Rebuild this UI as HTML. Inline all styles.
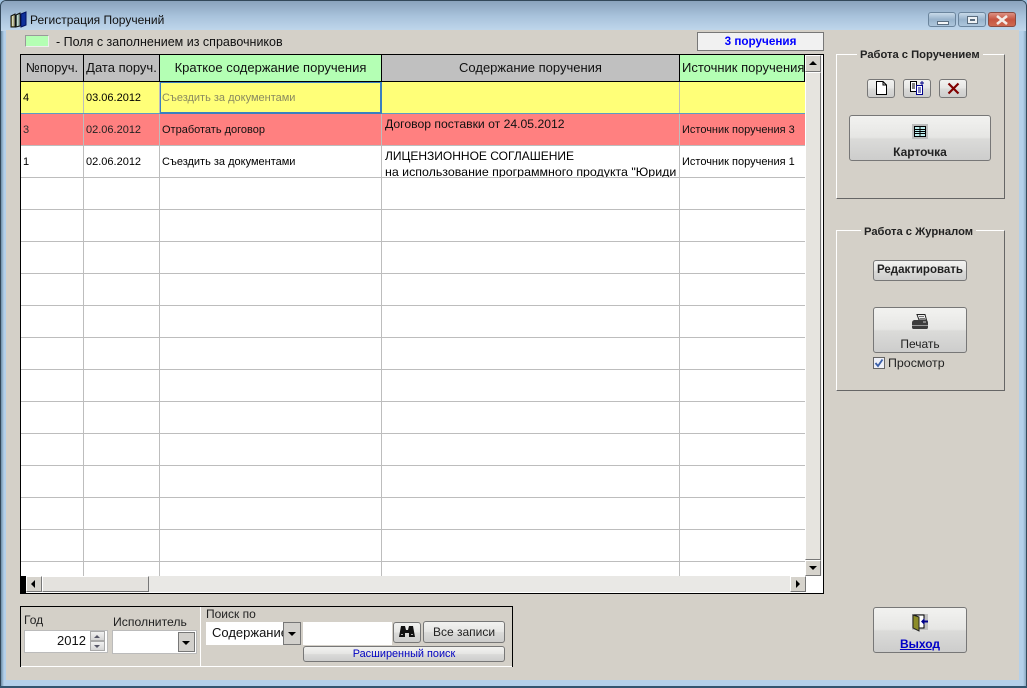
<!DOCTYPE html>
<html><head><meta charset="utf-8"><style>
html,body{margin:0;padding:0;background:#fff}
#w{position:relative;width:1027px;height:688px;overflow:hidden;font-family:"Liberation Sans",sans-serif;font-size:12px;color:#000;background:#9fc2e0}
#w div,#w span.a{position:absolute;box-sizing:border-box;white-space:nowrap}
.t{line-height:14px}
.btn{border:1px solid #777;border-radius:3px;background:linear-gradient(#f2f2f0 0,#e6e6e4 48%,#dbdbd9 52%,#cdcdcc 100%);text-align:center}
.h{height:26px;top:55px;line-height:26px;border-right:1px solid #000;text-align:center;background:#c0c0c0;font-size:13px;color:#111}
.c{font-size:11px;line-height:13px}
.v{top:82px;width:1px;height:494px;background:#bdbdbd}
.l{left:21px;width:784px;height:1px;background:#bdbdbd}
.sb{background:#d6d3cc;border:1px solid;border-color:#fff #777 #777 #fff}
.inp{background:#fff}
</style></head><body><div id="w">
<!-- window frame -->
<div style="left:0;top:0;width:1027px;height:688px;background:linear-gradient(90deg,#6f8fa8 0,#b4d0ea 3px,#b4d0ea 1022px,#6f8fa8 1027px);border:1px solid #33485a;border-radius:6px 6px 0 0"></div>
<div style="left:1px;top:1px;width:1025px;height:30px;background:linear-gradient(#8aa3bd 0,#a8c2db 50%,#c0d7ec 100%);border-radius:5px 5px 0 0"></div>
<div style="left:6px;top:30px;width:1013px;height:650px;background:#d4d0c8"></div>
<div style="left:0;top:686px;width:1027px;height:2px;background:#33556f"></div>
<!-- title -->
<svg style="position:absolute;left:10px;top:11px" width="17" height="17" viewBox="0 0 17 17"><path d="M1 5L5 3V16L1 16Z" fill="#9a9a50" stroke="#111"/><path d="M2.500 5V15M4 4.500V15" stroke="#eee" stroke-width=".7"/><path d="M6 4L10 2V15L6 16Z" fill="#6a9a88" stroke="#111"/><path d="M7.500 4V15M9 3.500V14.500" stroke="#eee" stroke-width=".7"/><path d="M11 3L16 1V14L11 16Z" fill="#10309a" stroke="#001060"/></svg>
<div class="t" style="left:30px;top:13px;font-size:12px;color:#111">Регистрация Поручений</div>
<div style="left:928px;top:12px;width:28px;height:15px;border:1px solid #6b859d;border-radius:3px;background:linear-gradient(#c8dae9,#98b3cc 50%,#adc6dc)"><div style="left:8px;top:8px;width:12px;height:4px;background:#f4f6f8;border:1px solid #5a6d7f"></div></div>
<div style="left:958px;top:12px;width:28px;height:15px;border:1px solid #6b859d;border-radius:3px;background:linear-gradient(#c8dae9,#98b3cc 50%,#adc6dc)"><div style="left:8px;top:3px;width:11px;height:8px;background:#eef2f5;border:1px solid #5a6d7f"><div style="left:2px;top:2px;width:5px;height:2px;background:#5a6d7f"></div></div></div>
<div style="left:988px;top:12px;width:28px;height:15px;border:1px solid #8a4a40;border-radius:3px;background:linear-gradient(#dc9183,#c65440 50%,#cf6a52)"></div>
<svg style="position:absolute;left:995px;top:15px" width="14" height="10" viewBox="0 0 14 10"><path d="M2 1L12 9M12 1L2 9" stroke="#f3ece8" stroke-width="2.600"/></svg>
<!-- legend -->
<div style="left:25px;top:35px;width:24px;height:12px;background:#b4ffb4;border:1px solid;border-color:#999 #eee #eee #999"></div>
<div class="t" style="left:56px;top:35px;font-size:12.500px;color:#111">- Поля с заполнением из справочников</div>
<div style="left:697px;top:32px;width:127px;height:19px;background:#f1f1f1;border:1px solid #777;color:#0000ff;font-weight:bold;font-size:11.700px;text-align:center;line-height:17px">3 поручения</div>
<!-- grid -->
<div style="left:20px;top:54px;width:804px;height:540px;background:#fff;border:1px solid #000"></div>
<div class="h" style="left:21px;width:63px">№поруч.</div>
<div class="h" style="left:84px;width:76px">Дата поруч.</div>
<div class="h" style="left:160px;width:222px;background:#b4ffb4">Краткое содержание поручения</div>
<div class="h" style="left:382px;width:298px">Содержание поручения</div>
<div class="h" style="left:680px;width:125px;background:#b4ffb4;text-align:left;padding-left:2px;overflow:hidden">Источник поручения</div>
<div style="left:21px;top:81px;width:784px;height:1px;background:#000"></div>
<div style="left:21px;top:82px;width:784px;height:32px;background:#ffff78"></div>
<div style="left:21px;top:114px;width:784px;height:32px;background:#ff8080"></div>
<div class="v" style="left:83px"></div><div class="v" style="left:159px"></div><div class="v" style="left:381px"></div><div class="v" style="left:679px"></div>
<div class="l" style="top:145px"></div><div class="l" style="top:177px"></div><div class="l" style="top:209px"></div><div class="l" style="top:241px"></div><div class="l" style="top:273px"></div><div class="l" style="top:305px"></div><div class="l" style="top:337px"></div><div class="l" style="top:369px"></div><div class="l" style="top:401px"></div><div class="l" style="top:433px"></div><div class="l" style="top:465px"></div><div class="l" style="top:497px"></div><div class="l" style="top:529px"></div><div class="l" style="top:561px"></div>
<div style="left:21px;top:113px;width:784px;height:1px;background:#5a9bc4"></div>
<div style="left:160px;top:82px;width:222px;height:32px;border:2px solid #3a7fc0;border-width:1px 2px 2px 1px"></div>
<div class="c" style="left:23px;top:92px">4</div><div class="c" style="left:86px;top:92px">03.06.2012</div><div class="c" style="left:162px;top:92px;color:#8a8a60">Съездить за документами</div>
<div class="c" style="left:23px;top:124px;color:#333">3</div><div class="c" style="left:86px;top:124px;color:#222">02.06.2012</div><div class="c" style="left:162px;top:124px;color:#111">Отработать договор</div>
<div class="t" style="left:385px;top:117px;font-size:12.200px;color:#111">Договор поставки от 24.05.2012</div>
<div class="c" style="left:682px;top:124px;color:#111">Источник поручения 3</div>
<div class="c" style="left:23px;top:156px">1</div><div class="c" style="left:86px;top:156px">02.06.2012</div><div class="c" style="left:162px;top:156px">Съездить за документами</div>
<div style="left:382px;top:146px;width:297px;height:31px;overflow:hidden"><div class="t" style="left:3px;top:3px;font-size:12px">ЛИЦЕНЗИОННОЕ СОГЛАШЕНИЕ</div><div class="t" style="left:3px;top:19px;font-size:12.400px">на использование программного продукта "Юриди</div></div>
<div class="c" style="left:682px;top:156px">Источник поручения 1</div>
<!-- vscroll -->
<div style="left:805px;top:55px;width:17px;height:521px;background:#f1f0ee"></div>
<div class="sb" style="left:805px;top:55px;width:16px;height:17px"></div>
<div style="left:809px;top:61px;width:0;height:0;border:4px solid transparent;border-top:0;border-bottom:4px solid #000"></div>
<div class="sb" style="left:805px;top:72px;width:16px;height:488px;background:#e6e4df"></div>
<div class="sb" style="left:805px;top:560px;width:16px;height:16px"></div>
<div style="left:809px;top:566px;width:0;height:0;border:4px solid transparent;border-bottom:0;border-top:4px solid #000"></div>
<!-- hscroll -->
<div style="left:21px;top:576px;width:5px;height:17px;background:#000"></div>
<div style="left:26px;top:576px;width:780px;height:16px;background:#e9e8e5"></div>
<div class="sb" style="left:26px;top:576px;width:16px;height:16px"></div>
<div style="left:31px;top:580px;width:0;height:0;border:4px solid transparent;border-left:0;border-right:4px solid #000"></div>
<div class="sb" style="left:42px;top:576px;width:107px;height:16px;background:#e4e2de"></div>
<div class="sb" style="left:790px;top:576px;width:16px;height:16px"></div>
<div style="left:796px;top:580px;width:0;height:0;border:4px solid transparent;border-right:0;border-left:4px solid #000"></div>
<!-- group 1 -->
<div style="left:836px;top:54px;width:169px;height:145px;border:1px solid;border-color:#fff #666 #666 #fff"></div>
<div class="t" style="left:857px;top:48px;padding:0 3px;background:#d4d0c8;font-weight:bold;font-size:11.200px;color:#222">Работа с Поручением</div>
<div class="btn" style="left:867px;top:79px;width:28px;height:19px"></div>
<svg style="position:absolute;left:875px;top:81px" width="13" height="14" viewBox="0 0 13 14"><path d="M1.500 .5H8L11.500 4V13.500H1.500Z M8 .5V4H11.500" fill="#fff" stroke="#000"/></svg>
<div class="btn" style="left:903px;top:79px;width:28px;height:19px"></div>
<svg style="position:absolute;left:909px;top:80px" width="17" height="16" viewBox="0 0 17 16"><path d="M1.500 1.500H7.500V11.500H1.500Z" fill="#fff" stroke="#000"/><path d="M3 4H6M3 6H6M3 8H6" stroke="#000"/><path d="M7.500 5.500H13.500V14.500H7.500Z" fill="#fff" stroke="#00008a"/><path d="M9 8H12M9 10H12M9 12H12" stroke="#00008a"/><path d="M13 1V5M11 3H15" stroke="#00008a"/></svg>
<div class="btn" style="left:939px;top:79px;width:28px;height:19px"></div>
<svg style="position:absolute;left:947px;top:82px" width="13" height="13" viewBox="0 0 13 13"><path d="M1.500 1.500L11.500 11.500M11.500 1.500L1.500 11.500" stroke="#800000" stroke-width="2.200"/></svg>
<div class="btn" style="left:849px;top:115px;width:142px;height:46px;font-weight:bold;font-size:12px;padding-top:29px;line-height:14px;color:#222">Карточка</div>
<svg style="position:absolute;left:912px;top:124px" width="16" height="15" viewBox="0 0 16 15"><rect width="16" height="15" fill="#bdbdbd"/><path d="M2.500 2.500H13.500V12.500H2.500Z" fill="#bdeeee" stroke="#000"/><path d="M2 5.500H14M2 7.500H14M2 9.500H14M8 2V13" stroke="#000"/></svg>
<!-- group 2 -->
<div style="left:836px;top:230px;width:169px;height:161px;border:1px solid;border-color:#fff #666 #666 #fff"></div>
<div class="t" style="left:861px;top:225px;padding:0 3px;background:#d4d0c8;font-weight:bold;font-size:11.200px;color:#222">Работа с Журналом</div>
<div class="btn" style="left:873px;top:260px;width:94px;height:21px;font-weight:bold;font-size:11.500px;line-height:19px;color:#222">Редактировать</div>
<div class="btn" style="left:873px;top:307px;width:94px;height:46px;font-size:12px;padding-top:29px;line-height:14px;color:#222">Печать</div>
<svg style="position:absolute;left:911px;top:314px" width="18" height="17" viewBox="0 0 18 17"><path d="M6 .5H14L15.500 6H8Z" fill="#eee" stroke="#222"/><path d="M8 2.500H13M8.500 4.500H14" stroke="#777"/><path d="M1 9C1 7 2 6 4 6H15C16 6 17 7 17 9V13C17 15 16 15 15 15H3C2 15 1 15 1 13Z" fill="#3c3c3c"/><path d="M1 11.500H17" stroke="#999"/><path d="M12 8H15" stroke="#ccc"/></svg>
<div style="left:873px;top:357px;width:12px;height:12px;background:#eef0f8;border:1px solid #666"></div>
<svg style="position:absolute;left:874px;top:358px" width="10" height="10" viewBox="0 0 10 10"><path d="M1.500 5L4 8L8.500 1.500" fill="none" stroke="#3a5fa8" stroke-width="1.800"/></svg>
<div class="t" style="left:888px;top:356px;font-size:12.400px;color:#222">Просмотр</div>
<!-- exit -->
<div class="btn" style="left:873px;top:607px;width:94px;height:46px;font-weight:bold;font-size:12px;padding-top:29px;line-height:14px;color:#0000c8;text-decoration:underline">Выход</div>
<svg style="position:absolute;left:912px;top:614px" width="17" height="18" viewBox="0 0 17 18"><rect width="16" height="16" fill="#c0c0c0"/><path d="M2 1H12V14H2Z" fill="#fff" stroke="#000"/><path d="M1 1L7 3V17L1 14Z" fill="#8c8c28" stroke="#222"/><path d="M16 6.500H12.500V4L9 7.500L12.500 11V8.500H16Z" fill="#00008a"/></svg>
<!-- bottom panel -->
<div style="left:20px;top:606px;width:493px;height:61px;border:1px solid #000;border-bottom:0"></div>
<div style="left:21px;top:666px;width:491px;height:1px;background:#fff"></div>
<div style="left:200px;top:607px;width:1px;height:60px;background:#fff"></div>
<div class="t" style="left:24px;top:613px;font-size:12px;color:#222">Год</div>
<div class="t" style="left:113px;top:615px;font-size:12.200px;color:#222">Исполнитель</div>
<div class="t" style="left:206px;top:607px;font-size:12px;color:#222">Поиск по</div>
<div class="inp" style="left:24px;top:630px;width:84px;height:23px;border:1px solid #bbb"></div>
<div class="t" style="left:57px;top:634px;font-size:13px;color:#111">2012</div>
<div style="left:90px;top:631px;width:15px;height:10px;background:linear-gradient(#f1f1f1,#d5d5d5);border:1px solid #aaa"></div>
<div style="left:90px;top:641px;width:15px;height:10px;background:linear-gradient(#f1f1f1,#d5d5d5);border:1px solid #aaa"></div>
<div style="left:94px;top:635px;width:0;height:0;border:3px solid transparent;border-top:0;border-bottom:3px solid #556"></div>
<div style="left:94px;top:645px;width:0;height:0;border:3px solid transparent;border-bottom:0;border-top:3px solid #556"></div>
<div class="inp" style="left:112px;top:630px;width:85px;height:24px;border:1px solid #bbb"></div>
<div class="btn" style="left:178px;top:632px;width:17px;height:20px;border-radius:0;background:#d2d0cc"></div>
<div style="left:182px;top:641px;width:0;height:0;border:4px solid transparent;border-bottom:0;border-top:4px solid #000"></div>
<div class="inp" style="left:206px;top:622px;width:95px;height:23px;overflow:hidden"><div class="t" style="left:6px;top:4px;font-size:13px;color:#111">Содержание</div></div>
<div class="btn" style="left:283px;top:622px;width:18px;height:23px;border-radius:0;background:#d2d0cc"></div>
<div style="left:288px;top:632px;width:0;height:0;border:4px solid transparent;border-bottom:0;border-top:4px solid #000"></div>
<div class="inp" style="left:303px;top:622px;width:89px;height:23px"></div>
<div class="btn" style="left:393px;top:622px;width:28px;height:21px"></div>
<svg style="position:absolute;left:396px;top:624px" width="22" height="16" viewBox="0 0 22 16"><path d="M5 2H9L10 6H12L13 2H17L19 13H13V9H9V13H3Z" fill="#111"/><path d="M5 10.500H7M15 10.500H17" stroke="#aaa"/></svg>
<div class="btn" style="left:423px;top:621px;width:82px;height:22px;font-size:12px;line-height:20px;color:#222">Все записи</div>
<div class="btn" style="left:303px;top:646px;width:202px;height:16px;font-size:10.900px;line-height:15px;color:#0000c0">Расширенный поиск</div>
</div></body></html>
